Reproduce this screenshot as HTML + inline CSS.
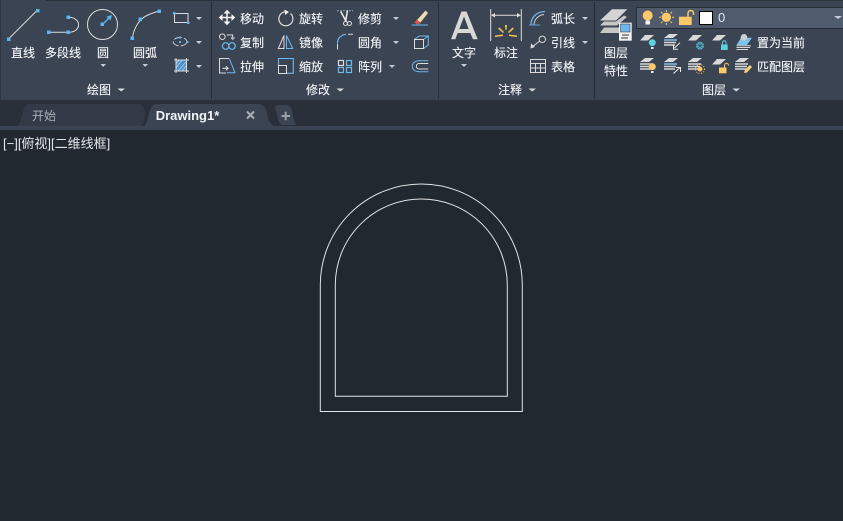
<!DOCTYPE html>
<html><head><meta charset="utf-8">
<style>
html,body{margin:0;padding:0;background:#212830;width:843px;height:521px;overflow:hidden}
svg{display:block}
text{font-family:"Liberation Sans","Noto Sans CJK SC",sans-serif;font-size:12px;fill:#f4f6f8;stroke:#f4f6f8;stroke-width:.12}
.m{text-anchor:middle}
</style></head><body>
<svg width="843" height="521" viewBox="0 0 843 521" xmlns="http://www.w3.org/2000/svg">
<defs>
<g id="layer"><path d="M4 0H13L7 5.500H-1Z" fill="#d8d8d8"/></g>
<g id="stack"><path d="M4 0H13L8 4H-1Z" fill="#d8d8d8"/><path d="M-1 6H12M-1 8.500H11" stroke="#d8d8d8" stroke-width="1.500"/><path d="M-1 11H10" stroke="#d8d8d8" stroke-width="1.500"/></g>
<g id="stackb"><path d="M4 0H13L8 4H-1Z" fill="#d8d8d8"/><path d="M-1 6H12" stroke="#7cc4f0" stroke-width="1.500"/><path d="M-1 8.500H11M-1 11H10" stroke="#d8d8d8" stroke-width="1.500"/></g>
</defs>
<rect width="843" height="521" fill="#212830"/>
<!-- ribbon -->
<rect width="843" height="100" fill="#3b4453"/>
<rect x="46" y="0" width="797" height="1" fill="#2b313b"/>
<rect x="0" y="0" width="1" height="100" fill="#2f3641"/>
<rect x="211" y="2" width="1" height="97" fill="#272d36"/>
<rect x="438" y="2" width="1" height="97" fill="#272d36"/>
<rect x="594" y="2" width="1" height="97" fill="#272d36"/>
<!-- tab strip -->
<rect y="100" width="843" height="26" fill="#2a303a"/>
<rect y="126" width="843" height="4" fill="#3b4453"/>
<path d="M17 126C23 124 21 104 30 104H138C143 104 145 110 145 114C145 120 143 124 140 126Z" fill="#333b48"/>
<path d="M144 126C149 124 148 104 156 104H258C263 104 266 108 267 113C268 120 270 124 274 126Z" fill="#3b4453"/>
<path d="M275 108C275 106 277 105 280 105H286C291 105 292 110 293 116C294 121 295 124 297 125H284C279 125 278 120 277 115C276 111 276 110 275 108Z" fill="#3b4453"/>
<text x="44" y="120" class="m" style="fill:#aab0b8;stroke:none">开始</text>
<text x="187.500" y="120" class="m" style="font-weight:bold;font-size:13px;fill:#f2f4f6;stroke:none">Drawing1*</text>
<path d="M247 111.500L254 118.500M254 111.500L247 118.500" stroke="#aab0b8" stroke-width="2"/>
<path d="M281.500 116H290M285.700 111.800V120.300" stroke="#9aa0a8" stroke-width="2"/>
<text x="3" y="148" style="font-size:13px;fill:#e4e6e8;stroke:none">[−][俯视][二维线框]</text>

<!-- Draw -->
<path d="M8.500 39L37 10.500" stroke="#dcdcdc" stroke-width="1"/>
<rect x="7" y="37.500" width="3.500" height="3.500" fill="#5cb4f0"/><rect x="36" y="9" width="3.500" height="3.500" fill="#5cb4f0"/>
<path d="M49 32.300H68.300M68.300 17.300C82 17.300 82 32.300 68.300 32.300" fill="none" stroke="#dcdcdc" stroke-width="1"/>
<rect x="47" y="30.500" width="3.500" height="3.500" fill="#5cb4f0"/><rect x="66.500" y="30.500" width="3.500" height="3.500" fill="#5cb4f0"/><rect x="66.500" y="15.500" width="3.500" height="3.500" fill="#5cb4f0"/>
<circle cx="102.500" cy="24.500" r="15" fill="none" stroke="#dcdcdc" stroke-width="1"/>
<path d="M103 24L110 17" stroke="#5cb4f0" stroke-width="1.300"/><path d="M112 15L106.500 16.500L110.500 20.500Z" fill="#5cb4f0"/>
<rect x="100.500" y="22.500" width="3.500" height="3.500" fill="#5cb4f0"/>
<path d="M132.300 38.300C134 27 140 19 146 16C150 14 155 12 159.300 11.300" fill="none" stroke="#dcdcdc" stroke-width="1"/>
<rect x="130.500" y="36.500" width="3.500" height="3.500" fill="#5cb4f0"/><rect x="138.500" y="17.500" width="3.500" height="3.500" fill="#5cb4f0"/><rect x="157.500" y="9.500" width="3.500" height="3.500" fill="#5cb4f0"/>
<text x="23" y="57" class="m">直线</text><text x="63" y="57" class="m">多段线</text>
<text x="103" y="57" class="m">圆</text><text x="145" y="57" class="m">圆弧</text>
<path d="M100.500 64H106L103.200 67Z" fill="#c8ccd2"/><path d="M142.500 64H148L145.200 67Z" fill="#c8ccd2"/>
<rect x="174.500" y="13.500" width="13.500" height="9" fill="none" stroke="#dcdcdc"/>
<rect x="173" y="12" width="2.500" height="2.500" fill="#5cb4f0"/><rect x="187" y="21.500" width="2.500" height="2.500" fill="#5cb4f0"/>
<ellipse cx="180" cy="41.700" rx="6.800" ry="4.200" fill="none" stroke="#c8ccd2" stroke-width=".9" stroke-dasharray="8 2"/>
<rect x="179" y="41" width="2" height="2" fill="#5cb4f0"/><rect x="186.500" y="41" width="2" height="2" fill="#5cb4f0"/><rect x="179" y="36.500" width="2" height="2" fill="#5cb4f0"/>
<rect x="176" y="60" width="10.500" height="11" fill="#4f8fc8"/>
<path d="M176 68L182 60M178 71L186 62M176 64L179 60M182 71L186 66" stroke="#a8d4f2" stroke-width="0.800"/>
<path d="M174 60H189M174 71H189M176 58V73M186.500 58V73" stroke="#dcdcdc" stroke-width="1"/>
<path d="M196 17H202L199 20ZM196 41H202L199 44ZM196 65H202L199 68Z" fill="#c8ccd2"/>
<text x="99" y="94" class="m">绘图</text><path d="M117.500 88.500H125L121.200 91.500Z" fill="#d8dade"/>

<!-- Modify -->
<path d="M220 17.500H234M227 11V24" fill="none" stroke="#f4f4f4" stroke-width="1.500"/>
<path d="M227 9.800L230.500 13.500H223.500ZM227 25.200L230.500 21.500H223.500ZM218.800 17.500L222.500 14V21ZM235.200 17.500L231.500 14V21Z" fill="#f4f4f4"/>
<path d="M285 11.800A7 7 0 1 0 290.500 13.500" fill="none" stroke="#dcdcdc" stroke-width="1.200"/><path d="M284.500 9.500L289 12L285 15Z" fill="#f4f4f4"/>
<path d="M337 10.800H353" stroke="#8fa8bc" stroke-dasharray="2 1"/>
<path d="M340.700 11.500L346.500 22M347.500 10.500L345.500 22" stroke="#f0f0f0" stroke-width="1.500"/>
<circle cx="345.500" cy="23.500" r="2" fill="none" stroke="#dcdcdc"/><circle cx="349.500" cy="23.500" r="2" fill="none" stroke="#dcdcdc"/>
<path d="M411.700 25H428" stroke="#6cb8ee"/><path d="M417 20L425.500 10.500L428 13L420.500 22.500Z" fill="#f0dcb0"/><path d="M414.500 22.500L417 19.500L420.500 23L417.500 24.500Z" fill="#e85050"/>
<circle cx="222.300" cy="36.700" r="2.800" fill="none" stroke="#dcdcdc"/>
<path d="M226.700 35H232.700V38M231 37.500L232.700 39.300L234.500 37.500" fill="none" stroke="#dcdcdc"/>
<circle cx="225.700" cy="46" r="3.300" fill="none" stroke="#6cb8ee" stroke-width="1.200"/><circle cx="232" cy="46" r="3.300" fill="none" stroke="#6cb8ee" stroke-width="1.200"/>
<path d="M284 35.500L278.300 48.500H284Z" fill="none" stroke="#dcdcdc"/><path d="M286.500 35.500V48.500H292.700Z" fill="none" stroke="#6cb8ee"/>
<path d="M337.500 43C337.500 38 341 35 346 34.300" fill="none" stroke="#6cb8ee" stroke-width="1.200"/><path d="M337.500 43.500V49.500M348 34.300H353" stroke="#dcdcdc"/>
<path d="M414 39.500L419.300 36H428.300V45L423.500 48.500M428.300 36L423.500 39.500" fill="none" stroke="#6cb8ee"/><rect x="414.500" y="39.500" width="9" height="9" fill="none" stroke="#dcdcdc"/>
<path d="M428.300 60.700H419.300C410 60.700 410 71.700 419.300 71.700H428.300" fill="none" stroke="#6cb8ee"/>
<path d="M428.300 63.500H419C415.500 63.500 415.500 69 419 69H428.300" fill="none" stroke="#dcdcdc"/>
<path d="M229 58.500H219.500V73H226" fill="none" stroke="#dcdcdc"/>
<path d="M229.300 58.500L235 72.800H226.700" fill="none" stroke="#6cb8ee"/><path d="M222.500 68.300H228M226 66.300L228 68.300L226 70.300" fill="none" stroke="#f0f0f0"/>
<path d="M278.500 65V58.500H293.300V73.300H286.700" fill="none" stroke="#6cb8ee" stroke-width="1.100"/>
<rect x="278.500" y="65.500" width="8" height="8" fill="none" stroke="#dcdcdc"/>
<g fill="none" stroke-width="1.200" stroke="#6cb8ee"><rect x="338.500" y="60.500" width="5" height="5" stroke="#dcdcdc"/><rect x="346.500" y="60.500" width="5" height="5"/><rect x="338.500" y="67.500" width="5" height="5"/><rect x="346.500" y="67.500" width="5" height="5"/></g>
<text x="240" y="23">移动</text><text x="299" y="23">旋转</text><text x="358" y="23">修剪</text>
<text x="240" y="47">复制</text><text x="299" y="47">镜像</text><text x="358" y="47">圆角</text>
<text x="240" y="71">拉伸</text><text x="299" y="71">缩放</text><text x="358" y="71">阵列</text>
<path d="M393 17H399L396 20ZM393 41H399L396 44ZM389 65H395L392 68Z" fill="#c8ccd2"/>
<text x="318" y="94" class="m">修改</text><path d="M336.500 88.500H344L340.200 91.500Z" fill="#d8dade"/>

<!-- Annotation -->
<path fill-rule="evenodd" d="M451 39.300L461.500 11.500H466.500L477.700 39.300H473L470.300 33H457.700L455.300 39.300ZM459.300 29H468.700L464 16.500Z" fill="#d8d8d8"/>
<path d="M490.700 9V41M521.300 9V41M492 15.300H520" stroke="#dcdcdc" fill="none"/>
<path d="M491 15.300L495 13V17.500ZM521 15.300L517 13V17.500Z" fill="#dcdcdc"/>
<path d="M505 25H507L506.500 30H505.500ZM498 28.500L499.500 27.500L504 32L503 33ZM514 28.500L512.500 27.500L508 32L509 33ZM495 37L495 35.500L503 34.500L503 36ZM517 37L517 35.500L509 34.500L509 36Z" fill="#f6c350"/>
<text x="464" y="57" class="m">文字</text><text x="506" y="57" class="m">标注</text>
<path d="M461 64H467L464 67Z" fill="#c8ccd2"/>
<path d="M531 25C531 17 537 11.500 545 11.500" fill="none" stroke="#6cb8ee" stroke-width="1.300"/>
<path d="M534 25C534 20 538 15 544 14.500" fill="none" stroke="#dcdcdc" stroke-width="0.900"/>
<path d="M529 25H540" stroke="#6cb8ee" stroke-width="0.800"/>
<circle cx="542.300" cy="39.300" r="3.200" fill="none" stroke="#dcdcdc"/><path d="M539.800 41L532 47" stroke="#dcdcdc"/><path d="M530.500 48.500L531 43.500L535 47Z" fill="#dcdcdc"/>
<g stroke="#dcdcdc" fill="none"><rect x="530.500" y="59.500" width="15" height="13"/><path d="M530 63.500H546M530 68H546M535.500 63.500V72.500M540.500 63.500V72.500"/></g>
<text x="551" y="23">弧长</text><text x="551" y="47">引线</text><text x="551" y="71">表格</text>
<path d="M582 17H588L585 20ZM582 41H588L585 44Z" fill="#c8ccd2"/>
<text x="510" y="94" class="m">注释</text><path d="M528.500 88.500H536L532.200 91.500Z" fill="#d8dade"/>

<!-- Layers -->
<path d="M612 9.300H627.300L616 20.500H600Z" fill="#d4d4d4"/><path d="M604 21.500L600 25.500H617L627 17L624 15.500L616 21.500Z" fill="#c8c8c8"/><path d="M604 27.500L600 33H619V27.500Z" fill="#c8c8c8"/>
<rect x="619" y="22.700" width="12.700" height="18" fill="#f4f4f4"/><rect x="620.500" y="24" width="9.500" height="8" fill="#6cb8ee" stroke="#222" stroke-width="0.500"/>
<path d="M622 35H629M621 38H628" stroke="#333"/>
<text x="616" y="57" class="m">图层</text><text x="616" y="75" class="m">特性</text>
<rect x="636.500" y="7.500" width="207" height="21" fill="#505b6d" stroke="#262c35"/>
<circle cx="647.700" cy="15.500" r="5" fill="#fcc868"/><rect x="645.500" y="20.500" width="4.500" height="4" fill="#f4f4f4"/>
<circle cx="666.300" cy="17.300" r="4.700" fill="#fcc868"/><path d="M666.300 10V12M666.300 23V25M659 17.300H661M672 17.300H674M661 12L662.500 13.500M672 12L670.500 13.500M661 23L662.500 21.500M672 23L670.500 21.500" stroke="#fcc868"/>
<rect x="679" y="16.700" width="12.700" height="8.300" fill="#fcc868"/><path d="M688 16.500V13.500C688 9.500 693.500 9.500 693.500 13.500V15" fill="none" stroke="#fcc868" stroke-width="1.500"/>
<rect x="699.500" y="11.500" width="13" height="13" fill="#fff" stroke="#000"/>
<text x="718" y="22" style="fill:#d8ecfa;font-size:13px;stroke:none">0</text>
<path d="M834 16H842L838 19Z" fill="#c8ccd2"/>

<use href="#layer" x="641" y="35"/><circle cx="652.300" cy="42.700" r="3.500" fill="#5fd0e0"/><rect x="651" y="47" width="2.500" height="2" fill="#eee"/>
<use href="#stackb" x="665" y="34"/><path d="M674.500 48L680 42.700M673.500 44.500V49.300H678" stroke="#f0f0f0" fill="none"/>
<use href="#layer" x="689" y="35"/><circle cx="700" cy="45.700" r="4" fill="#5fd0e0" opacity="0.800"/><path d="M696 45.700H704M700 41.700V49.700M697 43L703 48.500M703 43L697 48.500" stroke="#2f5f70" stroke-width="0.600"/>
<use href="#layer" x="713" y="35"/><rect x="721" y="44.500" width="6.700" height="5.500" fill="#5fd0e0"/><path d="M722.500 44.500V43C722.500 40 726 40 726 43V44.500" fill="none" stroke="#5fd0e0"/>
<path d="M741 37.700H752L747 45H736.500Z" fill="#7cc4f0"/><circle cx="744" cy="37.300" r="3.300" fill="#d0d0d0"/><path d="M736.500 45.700H751M736.500 47.500H750M736.500 49.500H748" stroke="#d8d8d8"/>

<use href="#stack" x="641" y="58"/><circle cx="652.300" cy="66.700" r="3.500" fill="#fcc868"/><rect x="651" y="71" width="2.500" height="2" fill="#eee"/>
<use href="#stackb" x="665" y="58"/><path d="M673.500 73.500L680 67.500M676 67.500H680.500V72" stroke="#f0f0f0" fill="none"/>
<use href="#stack" x="689" y="58"/><circle cx="700" cy="69" r="2.500" fill="#fcc868"/><circle cx="700" cy="69" r="4.500" fill="none" stroke="#fcc868" stroke-dasharray="1 1.500"/>
<use href="#layer" x="713" y="59"/><rect x="719" y="67.500" width="7.500" height="5.800" fill="#fcc868"/><path d="M724.500 67.500V65.500C724.500 62.500 728.500 62.500 728.500 65.500" fill="none" stroke="#fcc868"/>
<use href="#stack" x="736" y="58"/><path d="M745 69.500L750 65L752 67L747 72.500L744 73Z" fill="#f4d080"/>
<text x="757" y="47">置为当前</text><text x="757" y="71">匹配图层</text>
<text x="714" y="94" class="m">图层</text><path d="M732.500 88.500H740L736.200 91.500Z" fill="#d8dade"/>

<!-- Drawing -->
<g fill="none" stroke="#e2e4e6" stroke-width="1">
<path d="M320.300 285V411.500H522.300V285A101 101 0 0 0 320.300 285Z"/>
<path d="M335.300 285V396.200H507.300V285A86 86 0 0 0 335.300 285Z"/>
</g>
</svg>
</body></html>
